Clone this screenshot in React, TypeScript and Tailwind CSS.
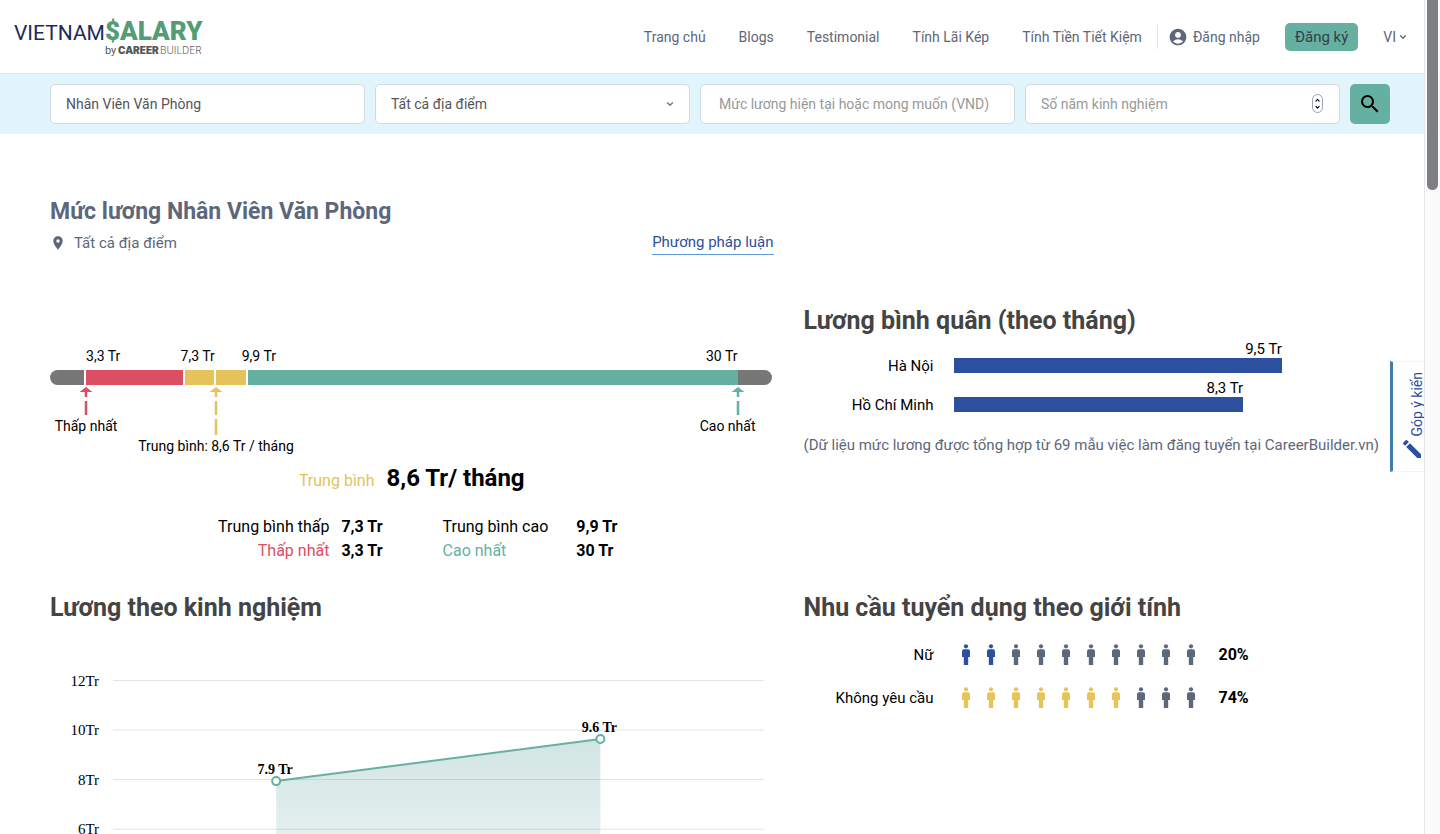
import React, { useState } from 'react'
import { MdAccountCircle, MdEdit, MdLocationOn, MdSearch } from 'react-icons/md'
import { FiChevronDown, FiChevronUp } from 'react-icons/fi'
import clsx from 'clsx'

const navLinks = ['Trang chủ', 'Blogs', 'Testimonial', 'Tính Lãi Kép', 'Tính Tiền Tiết Kiệm']

const cities = [
  { name: 'Hà Nội', label: '9,5 Tr', value: 9.5 },
  { name: 'Hồ Chí Minh', label: '8,3 Tr', value: 8.38 },
]

const genders = [
  { name: 'Nữ', percent: 20, color: 'text-[#2c4f9e]' },
  { name: 'Không yêu cầu', percent: 74, color: 'text-[#e5c559]' },
]

const Logo: React.FC = () => (
  <a href="#" aria-label="VietnamSalary" className="block">
    <svg width="192" height="44" viewBox="0 0 192 44">
      <text x="0" y="25" fontFamily="Roboto" fontSize="21" fill="#1f2a5a">VIETNAM</text>
      <text x="91" y="25" fontFamily="Roboto" fontSize="26" fontWeight="900" fill="#549c78">$ALARY</text>
      <text x="91" y="39" fontFamily="Roboto" fontSize="11" fill="#555">by</text>
      <text x="104" y="39" fontFamily="Inter" fontSize="10" fontWeight="900" fill="#555">CAREER</text>
      <text x="146" y="39" fontFamily="Inter" fontSize="10" fontWeight="300" fill="#666">BUILDER</text>
    </svg>
  </a>
)

const Header: React.FC = () => (
  <header className="flex items-center justify-between h-[74px] pl-3.5 pr-8 border-b border-[#e0e8ec] text-sm text-[#5d677a]">
    <Logo />
    <nav className="flex items-center">
      <div className="flex gap-[33px] pr-[15px] border-r border-gray-200">
        {navLinks.map((link) => (
          <a key={link} href="#" className="leading-6">{link}</a>
        ))}
      </div>
      <a href="#" className="flex items-center gap-[5px] ml-2.5 leading-6">
        <MdAccountCircle className="w-5 h-5" />
        Đăng nhập
      </a>
      <a href="#" className="ml-[25px] px-2.5 leading-7 rounded-[5px] bg-[#66b0a2] text-[15px] text-[#333f48]">Đăng ký</a>
      <button type="button" className="flex items-center gap-0.5 ml-[25px] leading-6">
        VI
        <FiChevronDown className="w-2.5 h-2.5" strokeWidth={3} />
      </button>
    </nav>
  </header>
)

const fieldClass = 'w-full h-10 px-[15px] rounded-[5px] border border-[#cfdbe2] bg-white text-sm text-[#555] placeholder:text-[#999] outline-none'

const SearchBar: React.FC = () => {
  const [keyword, setKeyword] = useState('Nhân Viên Văn Phòng')
  const [location, setLocation] = useState('all')
  const [salary, setSalary] = useState('')
  const [years, setYears] = useState('')

  return (
    <form
      className="grid grid-cols-[1fr_1fr_1fr_1fr_40px] gap-2.5 px-[50px] py-2.5 bg-[#e2f4fc]"
      onSubmit={(e) => e.preventDefault()}
    >
      <input
        type="text"
        aria-label="Vị trí"
        value={keyword}
        onChange={(e) => setKeyword(e.target.value)}
        className={fieldClass}
      />
      <div className="relative">
        <select
          aria-label="Địa điểm"
          value={location}
          onChange={(e) => setLocation(e.target.value)}
          className={clsx(fieldClass, 'appearance-none')}
        >
          <option value="all">Tất cả địa điểm</option>
        </select>
        <FiChevronDown className="absolute right-[15px] top-[15px] w-2.5 h-2.5 text-gray-500 pointer-events-none" strokeWidth={3} />
      </div>
      <input
        type="text"
        aria-label="Mức lương"
        placeholder="Mức lương hiện tại hoặc mong muốn (VND)"
        value={salary}
        onChange={(e) => setSalary(e.target.value)}
        className={clsx(fieldClass, 'pl-[18px]')}
      />
      <div className="relative">
        <input
          type="text"
          inputMode="numeric"
          aria-label="Số năm kinh nghiệm"
          placeholder="Số năm kinh nghiệm"
          value={years}
          onChange={(e) => setYears(e.target.value)}
          className={fieldClass}
        />
        <span className="absolute right-[17px] top-2.5 flex flex-col items-center justify-between w-[11px] h-[19px] py-0.5 rounded-full border border-gray-400 text-black pointer-events-none">
          <FiChevronUp className="w-[7px] h-[7px]" strokeWidth={4} />
          <FiChevronDown className="w-[7px] h-[7px]" strokeWidth={4} />
        </span>
      </div>
      <button type="submit" aria-label="Tìm kiếm" className="flex items-center justify-center h-10 rounded-[5px] bg-[#66b0a2] text-black">
        <MdSearch className="w-6 h-6" />
      </button>
    </form>
  )
}

const Arrow: React.FC<{ long?: boolean; className: string }> = ({ long, className }) => (
  <svg width="14" height={long ? 48 : 28} viewBox={long ? '0 0 14 48' : '0 0 14 28'} className={className} fill="currentColor">
    <path d="M7 0L13.500 5H.5z" />
    <rect x="5.750" y="4" width="2.500" height="6" />
    <rect x="5.750" y="14" width="2.500" height="14" />
    {long && <rect x="5.750" y="32" width="2.500" height="16" />}
  </svg>
)

const SalaryRange: React.FC = () => (
  <div className="mt-[86px] pr-0.5 text-sm text-black">
    <div className="flex pl-[5%] pr-[34px] leading-6">
      <span className="w-[14.500%]">3,3 Tr</span>
      <span className="w-[9.400%]">7,3 Tr</span>
      <span className="flex-1">9,9 Tr</span>
      <span>30 Tr</span>
    </div>
    <div className="flex h-[15px] mt-0.5 rounded-full overflow-hidden bg-white">
      <div className="w-[5%] border-r-2 border-white bg-[#777]" />
      <div className="w-[13.700%] border-r-2 border-white bg-[#dc4e62]" />
      <div className="w-[4.300%] border-r-2 border-white bg-[#e5c35a]" />
      <div className="w-[4.400%] border-r-2 border-white bg-[#e5c35a]" />
      <div className="flex-1 bg-[#66b0a2]" />
      <div className="w-[34px] bg-[#777]" />
    </div>
    <div className="flex items-start pt-0.5 pl-1 pr-4 leading-[22px] whitespace-nowrap">
      <div className="flex flex-col items-center w-16">
        <Arrow className="text-[#dc4e62]" />
        <span>Thấp nhất</span>
      </div>
      <div className="flex flex-col items-center ml-[18px] w-40">
        <Arrow long className="text-[#e5c35a]" />
        <span>Trung bình: 8,6 Tr / tháng</span>
      </div>
      <div className="flex flex-col items-end ml-auto">
        <Arrow className="mr-[11px] text-[#66b0a2]" />
        <span>Cao nhất</span>
      </div>
    </div>
  </div>
)

const SalarySummary: React.FC = () => (
  <div className="text-base text-black">
    <p className="flex items-baseline justify-center gap-3 pt-[3px] leading-9">
      <span className="text-[#e5c35a]">Trung bình</span>
      <strong className="text-2xl leading-9 font-bold">8,6 Tr/ tháng</strong>
    </p>
    <div className="flex justify-center gap-[60px] mt-4 pl-3 leading-6">
      <dl className="grid grid-cols-[auto_auto] gap-x-3 text-right">
        <dt>Trung bình thấp</dt>
        <dd className="font-bold">7,3 Tr</dd>
        <dt className="text-[#dc4e62]">Thấp nhất</dt>
        <dd className="font-bold">3,3 Tr</dd>
      </dl>
      <dl className="grid grid-cols-[auto_auto] gap-x-7">
        <dt>Trung bình cao</dt>
        <dd className="font-bold">9,9 Tr</dd>
        <dt className="text-[#66b0a2]">Cao nhất</dt>
        <dd className="font-bold">30 Tr</dd>
      </dl>
    </div>
  </div>
)

const ExperienceChart: React.FC = () => {
  const ticks = ['12Tr', '10Tr', '8Tr', '6Tr', '4Tr', '2Tr', '0Tr']

  return (
    <svg viewBox="0 0 723 400" className="block w-full" fontFamily="'Liberation Serif', serif" fontSize="15">
      <defs>
        <linearGradient id="area" x1="0" y1="0" x2="0" y2="1">
          <stop offset="0" stopColor="#66a8a2" stopOpacity="0.3" />
          <stop offset="1" stopColor="#66a8a2" stopOpacity="0" />
        </linearGradient>
      </defs>
      {ticks.map((tick, i) => (
        <g key={tick}>
          <line x1="63" x2="713" y1={50.5 + i * 49.5} y2={50.5 + i * 49.5} stroke="#e3e3e3" />
          <text x="49" y={56 + i * 49.3} textAnchor="end">{tick}</text>
        </g>
      ))}
      <path d="M226 151L550 109V347H226z" fill="url(#area)" />
      <path d="M226 151L550 109" stroke="#66b0a2" strokeWidth="2" />
      <circle cx="226" cy="151" r="4" fill="#fff" stroke="#66b0a2" strokeWidth="2" />
      <circle cx="550" cy="109" r="4" fill="#fff" stroke="#66b0a2" strokeWidth="2" />
      <text x="225" y="144" textAnchor="middle" fontSize="14" fontWeight="bold">7.9 Tr</text>
      <text x="549" y="102" textAnchor="middle" fontSize="14" fontWeight="bold">9.6 Tr</text>
    </svg>
  )
}

const Person: React.FC<{ className: string }> = ({ className }) => (
  <svg width="10" height="22" viewBox="0 0 10 22" fill="currentColor" className={className}>
    <circle cx="5" cy="2.300" r="2.100" />
    <path d="M3 5.200h4a2 2 0 0 1 2 2V13H7.200v8H2.800v-8H1V7.200a2 2 0 0 1 2-2z" />
  </svg>
)

const SectionTitle: React.FC<{ children: React.ReactNode }> = ({ children }) => (
  <h2 className="text-[25px] leading-8 font-bold text-[#444]">{children}</h2>
)

const App: React.FC = () => {
  return (
    <div className="relative h-screen overflow-hidden bg-white font-[Roboto,sans-serif]">
      <Header />
      <SearchBar />

      <main className="px-[35px] pt-[62px]">
        <div className="w-[55%] px-[15px] text-[15px] text-[#5d677a]">
          <h1 className="text-[23px] leading-8 font-bold">Mức lương Nhân Viên Văn Phòng</h1>
          <div className="flex items-start justify-between">
            <p className="flex items-center gap-2 leading-[30px]">
              <MdLocationOn className="w-4 h-4" />
              Tất cả địa điểm
            </p>
            <a href="#" className="mt-[3px] leading-[23px] border-b border-[#5a9bdc] text-[#2c4f9e]">Phương pháp luận</a>
          </div>
        </div>

        <div className="flex">
          <section className="w-[55%] px-[15px]">
            <SalaryRange />
            <SalarySummary />
          </section>

          <section className="w-[45%] pl-[15px] pt-[47px] text-[15px] text-black">
            <SectionTitle>Lương bình quân (theo tháng)</SectionTitle>
            <ul className="-mt-[3px]">
              {cities.map((city) => (
                <li key={city.name} className="flex items-end gap-5 h-[39px]">
                  <span className="w-[130px] shrink-0 text-right leading-6 -mb-[5px]">{city.name}</span>
                  <div style={{ width: `${(city.value / 17.4) * 100}%` }} className="text-right">
                    <span className="block leading-[18px]">{city.label}</span>
                    <div className="h-[15px] bg-[#2c4f9e]" />
                  </div>
                </li>
              ))}
            </ul>
            <p className="mt-[21px] leading-6 whitespace-nowrap text-[#5d677a]">
              (Dữ liệu mức lương được tổng hợp từ 69 mẫu việc làm đăng tuyển tại CareerBuilder.vn)
            </p>
          </section>
        </div>

        <div className="flex pt-[29px]">
          <section className="w-[55%] px-[15px]">
            <SectionTitle>Lương theo kinh nghiệm</SectionTitle>
            <div className="pt-1.5">
              <ExperienceChart />
            </div>
          </section>

          <section className="w-[45%] pl-[15px] text-black">
            <SectionTitle>Nhu cầu tuyển dụng theo giới tính</SectionTitle>
            <ul className="flex flex-col gap-[19px] pt-[19px]">
              {genders.map((row) => (
                <li key={row.name} className="flex items-center text-[15px] leading-6">
                  <span className="w-[130px] text-right">{row.name}</span>
                  <span className="flex gap-[15px] ml-[27px] mr-[23px]">
                    {Array.from({ length: 10 }, (_, i) => (
                      <Person key={i} className={i < Math.round(row.percent / 10) ? row.color : 'text-[#5d677a]'} />
                    ))}
                  </span>
                  <strong className="text-base font-bold">{row.percent}%</strong>
                </li>
              ))}
            </ul>
          </section>
        </div>
      </main>

      <button
        type="button"
        className="absolute right-2 top-[361px] flex flex-col items-center justify-end w-[42px] h-[111px] pb-2.5 border border-l-3 border-gray-100 border-l-[#3f7db0] bg-white text-sm text-[#2c4f9e]"
      >
        <span className="[writing-mode:vertical-rl] rotate-180 -mr-2.5">Góp ý kiến</span>
        <MdEdit className="w-6 h-6 -scale-x-100" />
      </button>

      <div className="absolute right-0 top-0 w-4 h-full pl-0.5 border-l border-gray-200 bg-neutral-50/80">
        <div className="w-[11px] h-[190px] rounded-b-full rounded-t-md bg-[#7d7f80]" />
      </div>
    </div>
  )
}

export default App
